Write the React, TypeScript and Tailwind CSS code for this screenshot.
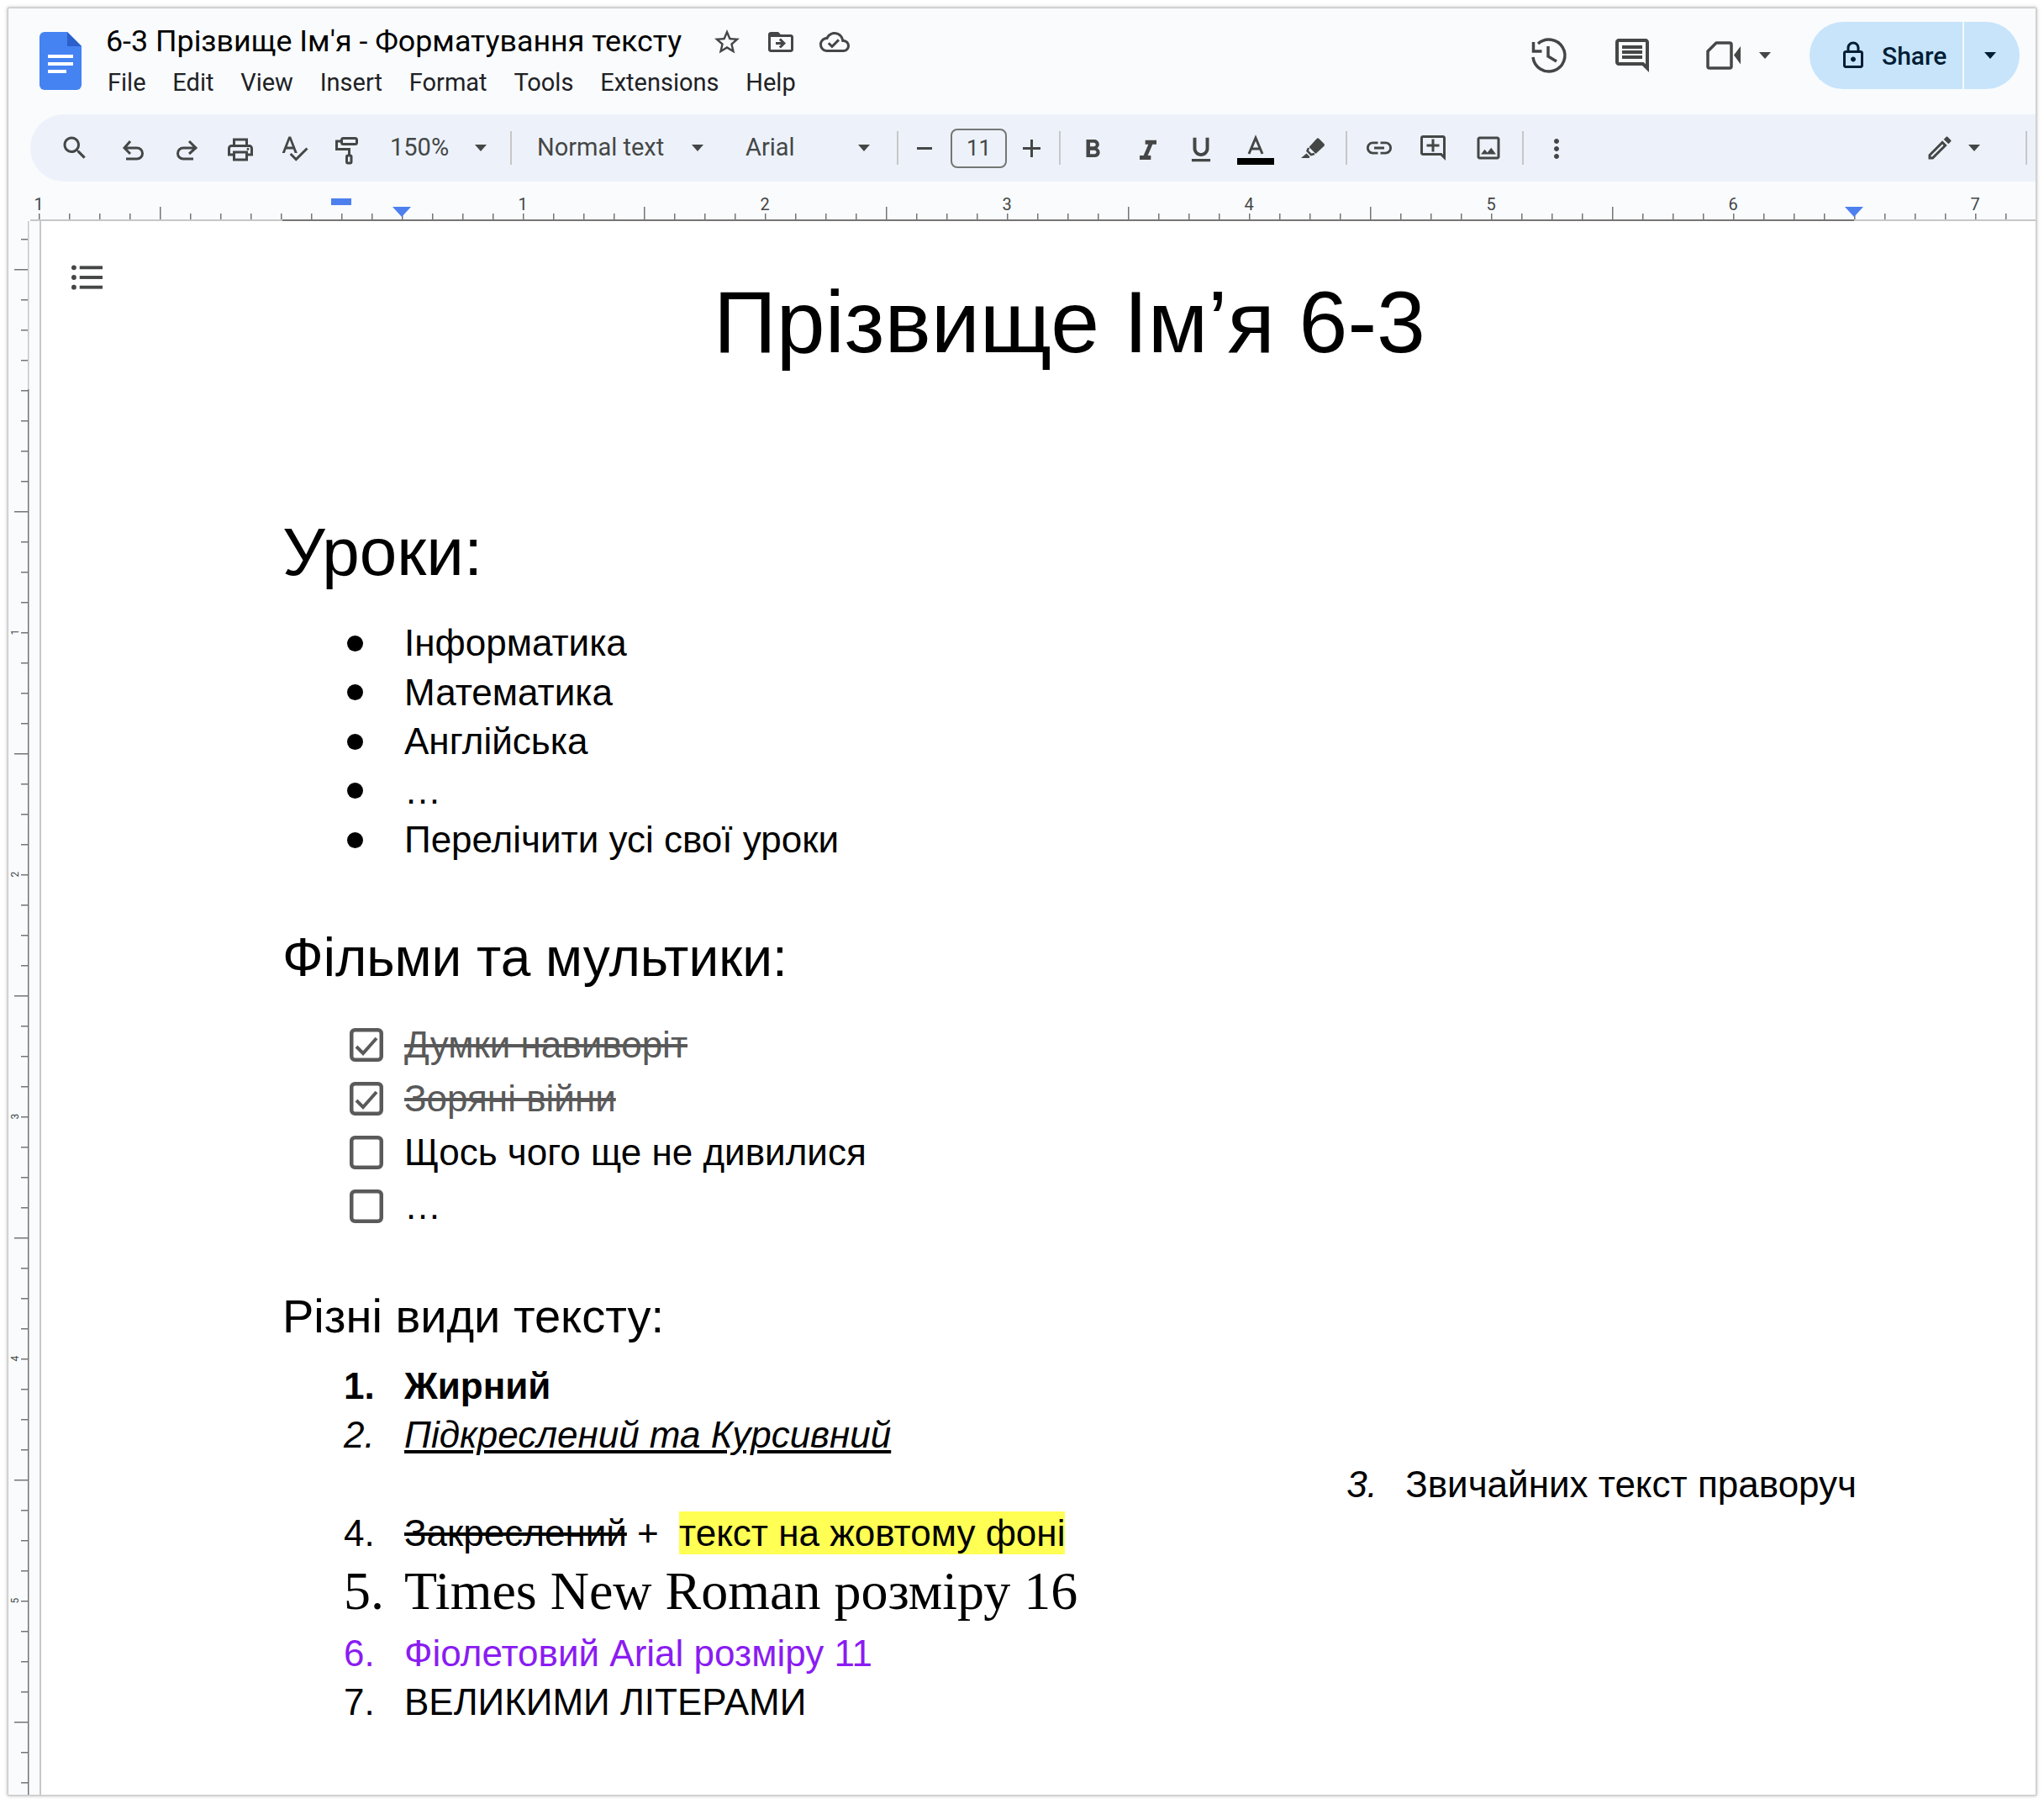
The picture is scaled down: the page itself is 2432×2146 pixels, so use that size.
import type { ReactNode } from 'react'

const ICON = {
  search: 'M15.5 14h-.79l-.28-.27C15.41 12.59 16 11.11 16 9.5 16 5.91 13.09 3 9.5 3S3 5.91 3 9.5 5.91 16 9.5 16c1.61 0 3.09-.59 4.23-1.57l.27.28v.79l5 4.99L20.49 19l-4.99-5zm-6 0C7.01 14 5 11.99 5 9.5S7.01 5 9.5 5 14 7.01 14 9.5 11.99 14 9.5 14z',
  print: 'M19 8h-1V3H6v5H5c-1.66 0-3 1.34-3 3v6h4v4h12v-4h4v-6c0-1.66-1.34-3-3-3zM8 5h8v3H8V5zm8 14H8v-4h8v4zm2-4v-2H6v2H4v-4c0-.55.45-1 1-1h14c.55 0 1 .45 1 1v4h-2zm0-4.5a1 1 0 1 0 0 2 1 1 0 0 0 0-2z',
  spell: 'M12.45 16h2.09L9.43 3H7.57L2.46 16h2.09l1.12-3h5.64l1.14 3zm-6.02-5L8.5 5.48 10.57 11H6.43zm15.16.59l-8.09 8.09L9.83 16l-1.41 1.41 5.09 5.09L23 13l-1.41-1.41z',
  star: 'M22 9.24l-7.19-.62L12 2 9.19 8.63 2 9.24l5.46 4.73L5.82 21 12 17.27 18.18 21l-1.63-7.03L22 9.24zM12 15.4l-3.76 2.27 1-4.28-3.32-2.88 4.38-.38L12 6.1l1.71 4.04 4.38.38-3.32 2.88 1 4.28L12 15.4z',
  folder: 'M20 6h-8l-2-2H4c-1.1 0-2 .9-2 2v12c0 1.1.9 2 2 2h16c1.1 0 2-.9 2-2V8c0-1.1-.9-2-2-2zm0 12H4V8h16v10zm-8.01-9l-1.41 1.41L12.16 12H8v2h4.16l-1.59 1.59L11.99 17 16 13.01 11.99 9z',
  cloud: 'M19.35 10.04C18.67 6.59 15.64 4 12 4 9.11 4 6.6 5.64 5.35 8.04 2.34 8.36 0 10.91 0 14c0 3.31 2.69 6 6 6h13c2.76 0 5-2.24 5-5 0-2.64-2.05-4.78-4.65-4.96zM19 18H6c-2.21 0-4-1.79-4-4 0-2.05 1.53-3.76 3.56-3.97l1.07-.11.5-.95C8.08 7.14 9.94 6 12 6c2.62 0 4.88 1.86 5.39 4.43l.3 1.5 1.53.11c1.56.1 2.78 1.41 2.78 2.96 0 1.65-1.35 3-3 3zm-9-3.82l-2.09-2.09L6.5 13.5 10 17l6.01-6.01-1.41-1.41z',
  comment: 'M21.99 4c0-1.1-.89-2-1.99-2H4c-1.1 0-2 .9-2 2v12c0 1.1.9 2 2 2h14l4 4-.01-18zM20 4v13.17L18.83 16H4V4h16zM6 12h12v2H6zm0-3h12v2H6zm0-3h12v2H6z',
  lock: 'M18 8h-1V6c0-2.76-2.24-5-5-5S7 3.24 7 6v2H6c-1.1 0-2 .9-2 2v10c0 1.1.9 2 2 2h12c1.1 0 2-.9 2-2V10c0-1.1-.9-2-2-2zM9 6c0-1.66 1.34-3 3-3s3 1.34 3 3v2H9V6zm9 14H6V10h12v10zm-6-3c1.1 0 2-.9 2-2s-.9-2-2-2-2 .9-2 2 .9 2 2 2z',
  bold: 'M15.6 10.79c.97-.67 1.65-1.77 1.65-2.79 0-2.26-1.75-4-4-4H7v14h7.04c2.09 0 3.71-1.7 3.71-3.79 0-1.52-.86-2.82-2.15-3.42zM10 6.5h3c.83 0 1.5.67 1.5 1.5s-.67 1.5-1.5 1.5h-3v-3zm3.5 9H10v-3h3.5c.83 0 1.5.67 1.5 1.5s-.67 1.5-1.5 1.5z',
  italic: 'M10 4v3h2.21l-3.42 8H6v3h8v-3h-2.21l3.42-8H18V4z',
  underline: 'M12 17c3.31 0 6-2.69 6-6V3h-2.5v8c0 1.93-1.57 3.5-3.5 3.5S8.5 12.93 8.5 11V3H6v8c0 3.31 2.69 6 6 6zm-7 2v2h14v-2H5z',
  link: 'M3.9 12c0-1.71 1.39-3.1 3.1-3.1h4V7H7c-2.76 0-5 2.24-5 5s2.24 5 5 5h4v-1.9H7c-1.71 0-3.1-1.39-3.1-3.1zM8 13h8v-2H8v2zm9-6h-4v1.9h4c1.71 0 3.1 1.39 3.1 3.1s-1.39 3.1-3.1 3.1h-4V17h4c2.76 0 5-2.24 5-5s-2.24-5-5-5z',
  addComment: 'M22 4c0-1.1-.9-2-2-2H4c-1.1 0-2 .9-2 2v12c0 1.1.9 2 2 2h14l4 4V4zm-2 13.17L18.83 16H4V4h16v13.17zM13 5h-2v4H7v2h4v4h2v-4h4V9h-4z',
  image: 'M19 5v14H5V5h14m0-2H5c-1.1 0-2 .9-2 2v14c0 1.1.9 2 2 2h14c1.1 0 2-.9 2-2V5c0-1.1-.9-2-2-2zm-4.86 8.86l-3 3.87L9 13.14 6 17h12l-3.86-5.14z',
  pencil: 'M14.06 9.02l.92.92L5.92 19H5v-.92l9.06-9.06M17.66 3c-.25 0-.51.1-.7.29l-1.83 1.83 3.75 3.75 1.83-1.83c.39-.39.39-1.02 0-1.41l-2.34-2.34c-.2-.2-.45-.29-.71-.29zm-3.6 3.19L3 17.25V21h3.75L17.81 9.94l-3.75-3.75z',
  more: 'M12 8c1.1 0 2-.9 2-2s-.9-2-2-2-2 .9-2 2 .9 2 2 2zm0 2c-1.1 0-2 .9-2 2s.9 2 2 2 2-.9 2-2-.9-2-2-2zm0 6c-1.1 0-2 .9-2 2s.9 2 2 2 2-.9 2-2-.9-2-2-2z',
}

function Icon({ d, size = 36, color = '#444746' }: { d: string; size?: number; color?: string }) {
  return (
    <svg width={size} height={size} viewBox="0 0 24 24" fill={color}>
      <path d={d} />
    </svg>
  )
}

// drawn in real pixels, so the stroke stays at the 3px the toolbar uses
function Stroke({ children, size = 36, width = 3 }: { children: ReactNode; size?: number; width?: number }) {
  return (
    <svg className="overflow-visible" width={size} height={size} viewBox={`0 0 ${size} ${size}`} fill="none" stroke="#444746" strokeWidth={width}>
      {children}
    </svg>
  )
}

function Caret({ color = '#444746' }: { color?: string }) {
  return (
    <svg width="16" height="10" viewBox="0 0 16 10" fill={color}>
      <path d="M1 1h14L8 9z" />
    </svg>
  )
}

function Slot({ w = 64, children, className = '' }: { w?: 64 | 60; children: ReactNode; className?: string }) {
  return (
    <div className={`flex h-full shrink-0 items-center justify-center ${w === 64 ? 'w-[64px]' : 'w-[60px]'} ${className}`}>
      {children}
    </div>
  )
}

function Sep({ className = '' }: { className?: string }) {
  return <div className={`h-[40px] w-[2px] shrink-0 bg-[#c7c7c7] ${className}`} />
}

function TopRuler() {
  const ticks = Array.from({ length: 67 }, (_, i) => 46 + 36 * i)
  const digits = [[46, '1'], [622, '1'], [910, '2'], [1198, '3'], [1486, '4'], [1774, '5'], [2062, '6'], [2350, '7']] as const
  return (
    <svg className="block shrink-0" width="2412" height="47" viewBox="10 216 2412 47">
      {ticks.map((x) => {
        const tall = (x - 190) % 288 === 0
        return <rect key={x} x={x} y={tall ? 246 : 254} width="1.5" height={tall ? 16 : 8} fill="#757575" />
      })}
      {digits.map(([x, t], i) => (
        <text key={i} x={x} y="250" textAnchor="middle" fontFamily="Roboto, sans-serif" fontSize="20" fill="#444746">
          {t}
        </text>
      ))}
      <rect x="36" y="261" width="300" height="2" fill="#c7c7c7" />
      <rect x="336" y="261" width="1870" height="2" fill="#757575" />
      <rect x="2206" y="261" width="216" height="2" fill="#c7c7c7" />
      <rect x="394" y="236" width="24" height="8" fill="#4d80ee" />
      <path d="M467 246h22l-11 12zM2195 246h22l-11 12z" fill="#4d80ee" />
    </svg>
  )
}

function SideRuler() {
  const ticks = Array.from({ length: 52 }, (_, i) => 284 + 36 * i)
  const digits = [[752, '1'], [1040, '2'], [1328, '3'], [1616, '4'], [1904, '5']] as const
  return (
    <svg className="block shrink-0" width="26" height="1873" viewBox="9 263 26 1873">
      <rect x="32" y="263" width="1.5" height="200" fill="#c7c7c7" />
      <rect x="32" y="463" width="1.5" height="1673" fill="#757575" />
      {ticks.map((y) => {
        const tall = (y - 320) % 288 === 0
        return <rect key={y} x={tall ? 16 : 24} y={y} width={tall ? 16 : 8} height="1.5" fill="#757575" />
      })}
      {digits.map(([y, t]) => (
        <text key={t} x="0" y="0" transform={`translate(21 ${y}) rotate(-90)`} textAnchor="middle" fontFamily="Roboto, sans-serif" fontSize="12" fill="#444746">
          {t}
        </text>
      ))}
    </svg>
  )
}

function Bullet({ children }: { children: ReactNode }) {
  return (
    <div className="flex h-[58.5px] items-center pl-[77px]">
      <span className="mr-[49px] h-[19px] w-[19px] shrink-0 rounded-full bg-black" />
      <span>{children}</span>
    </div>
  )
}

function Check({ checked, children }: { checked?: boolean; children: ReactNode }) {
  return (
    <div className="flex h-[64px] items-center pl-[80px]">
      <svg className="mr-[25px] shrink-0" width="40" height="40" viewBox="0 0 40 40" fill="none">
        <rect x="2.25" y="2.25" width="35.5" height="35.5" rx="4" stroke="#5a5a5a" strokeWidth="4.5" />
        {checked && <path d="M8 22l8 8 16-18" stroke="#5a5a5a" strokeWidth="4" />}
      </svg>
      <span className={checked ? 'text-[#595959] line-through' : ''}>{children}</span>
    </div>
  )
}

function Numbered({ n, className = '', children }: { n: string; className?: string; children: ReactNode }) {
  return (
    <div className={`flex h-[58.5px] items-center whitespace-nowrap pl-[73px] ${className}`}>
      <span className="w-[72px] shrink-0">{n}</span>
      <span>{children}</span>
    </div>
  )
}

export default function App() {
  return (
    <div className="h-[2146px] w-[2432px] overflow-hidden bg-white pl-[9px] pt-[9px]">
      <div className="flex h-[2127px] w-[2414px] flex-col overflow-hidden border border-[#c8c8c8] bg-[#f9fbfd] shadow-[0_0_4px_rgba(0,0,0,0.35)]">
        {/* header */}
        <header className="flex h-[126px] shrink-0 items-start">
          <svg className="ml-[37px] mt-[27px] shrink-0" width="50" height="70" viewBox="0 0 50 70">
            <path d="M6 1h27l17 17v46a6 6 0 0 1-6 6H6a6 6 0 0 1-6-6V7a6 6 0 0 1 6-6z" fill="#4582f2" />
            <path d="M33 1l17 17H33z" fill="#2a5fcc" />
            <rect x="10" y="28" width="30" height="4" fill="#fff" />
            <rect x="10" y="37" width="30" height="4" fill="#fff" />
            <rect x="10" y="46" width="22" height="4" fill="#fff" />
          </svg>
          <div className="ml-[29px] flex flex-col font-['Roboto',sans-serif]">
            <div className="mt-[17px] flex h-[46px] items-center">
              <span className="w-[686px] whitespace-nowrap text-[35.8px] text-black">6-3 Прізвище Ім'я - Форматування тексту</span>
              <span className="ml-[35px] flex h-full w-[36px] items-center"><Icon d={ICON.star} /></span>
              <span className="ml-[28px] flex h-full w-[36px] items-center"><Icon d={ICON.folder} /></span>
              <span className="ml-[28px] flex h-full w-[36px] items-center"><Icon d={ICON.cloud} /></span>
            </div>
            <nav className="ml-[2px] mt-[7px] flex gap-[31.8px] text-[29px] leading-[36px] text-[#202124]">
              {['File', 'Edit', 'View', 'Insert', 'Format', 'Tools', 'Extensions', 'Help'].map((m) => (
                <span key={m}>{m}</span>
              ))}
            </nav>
          </div>
          <div className="ml-auto mr-[19px] mt-[16px] flex h-[80px] items-center">
            <Stroke size={48} width={3.5}>
              <path d="M11 10A19 19 0 1 1 5 26M5.5 8v11h10M23 13v12l10 6" />
            </Stroke>
            <span className="ml-[51px]"><Icon d={ICON.comment} size={48} /></span>
            <span className="ml-[60px] flex">
              <Stroke size={48} width={3.5}>
                <path d="M6 19L16 9h16a2 2 0 0 1 2 2v26a2 2 0 0 1-2 2H8a2 2 0 0 1-2-2z" strokeLinejoin="round" />
                <path d="M37 23.5L45 13v21.5z" fill="#444746" stroke="none" />
              </Stroke>
            </span>
            <span className="ml-[18px] mr-[45px]"><Caret /></span>
            <div className="flex h-[80px] w-[250px] items-center rounded-full bg-[#c7e4fb] font-['Roboto',sans-serif] text-[#001d35]">
              <span className="ml-[34px]"><Icon d={ICON.lock} color="#001d35" /></span>
              <span className="ml-[16px] w-[78px] text-[30px] font-medium">Share</span>
              <span className="ml-[18px] h-full w-[2px] bg-[#f4f9fd]" />
              <span className="ml-[23px]"><Caret color="#001d35" /></span>
            </div>
          </div>
        </header>

        {/* toolbar */}
        <div className="ml-[26px] flex h-[80px] shrink-0 items-center rounded-l-[40px] bg-[#edf2fa] font-['Roboto',sans-serif] text-[29px] text-[#444746]">
          <Slot className="ml-[21px]"><Icon d={ICON.search} /></Slot>
          <Slot className="ml-[5px]">
            <Stroke><path d="M15 10l-7 8 7 7M8 18h15a6.5 6.5 0 0 1 0 13H10" /></Stroke>
          </Slot>
          <Slot>
            <Stroke><path d="M21 10l8 8-8 7M29 18H14a6.5 6.5 0 0 0 0 13h12" /></Stroke>
          </Slot>
          <Slot className="pt-[4px]"><Icon d={ICON.print} /></Slot>
          <Slot><Icon d={ICON.spell} /></Slot>
          <Slot>
            <Stroke>
              <rect x="10.5" y="6.5" width="18" height="7" rx="2" />
              <path d="M10 10H4.5v9.5h15V26" />
              <rect x="16.5" y="27" width="5.5" height="9" rx="1.5" />
            </Stroke>
          </Slot>
          <span className="ml-[18px] w-[71px]">150%</span>
          <span className="ml-[29px]"><Caret /></span>
          <Sep className="ml-[27px]" />
          <span className="ml-[30px] w-[153px] whitespace-nowrap">Normal text</span>
          <span className="ml-[30px]"><Caret /></span>
          <span className="ml-[49px] w-[59px]">Arial</span>
          <span className="ml-[74px]"><Caret /></span>
          <Sep className="ml-[31px]" />
          <span className="ml-[22px] h-[3px] w-[18px] bg-[#444746]" />
          <span className="ml-[22px] flex h-[47px] w-[67px] items-center justify-center rounded-[8px] border-2 border-[#747775] text-[26px]">11</span>
          <svg className="ml-[14px]" width="30" height="30" viewBox="0 0 30 30" fill="#444746"><path d="M14 5h3v9h9v3h-9v9h-3v-9H5v-3h9z" /></svg>
          <Sep className="ml-[18px]" />
          <Slot w={60} className="ml-[8px] pt-[4px]"><Icon d={ICON.bold} /></Slot>
          <Slot className="ml-[4px] pt-[7px]"><Icon d={ICON.italic} size={40} /></Slot>
          <Slot w={60} className="ml-[1px] pt-[4px]"><Icon d={ICON.underline} size={38} /></Slot>
          <Slot w={64} className="ml-[3px]">
            <svg width="48" height="40" viewBox="0 0 48 40" fill="none" stroke="#444746" strokeWidth="3">
              <path d="M16 27l8-19 8 19M19 21h10" />
              <rect x="2" y="32" width="44" height="8" fill="#000" stroke="none" />
            </svg>
          </Slot>
          <Slot className="ml-[5px]">
            <svg width="36" height="36" viewBox="0 0 36 36" fill="#444746">
              <path d="M21.6 7a2 2 0 0 1 2.8 0l6 6a2 2 0 0 1 0 2.8L20.5 25 12.5 17z" />
              <path d="M12 18l-1.5 3.5 4.5 4.5 4-1" fill="none" stroke="#444746" strokeWidth="2.5" />
              <path d="M9.5 24.5l4 4-1 1.5H3z" />
            </svg>
          </Slot>
          <Sep className="ml-[6px]" />
          <Slot className="ml-[6px]"><Icon d={ICON.link} /></Slot>
          <Slot><Icon d={ICON.addComment} /></Slot>
          <Slot className="ml-[2px]"><Icon d={ICON.image} /></Slot>
          <Sep className="ml-[8px]" />
          <Slot className="ml-[7px] pt-[2px]"><Icon d={ICON.more} /></Slot>
          <span className="ml-auto"><Icon d={ICON.pencil} /></span>
          <span className="ml-[15px]"><Caret /></span>
          <Sep className="ml-[53px] mr-[10px]" />
        </div>

        <TopRuler />

        {/* document */}
        <div className="flex min-h-0 flex-1">
          <SideRuler />
          <div className="w-[13px] shrink-0 border-r-2 border-[#c7c7c7]" />
          <main className="flex flex-1 bg-white font-['Liberation_Sans',Arial,sans-serif] text-[44px] leading-[58px] text-black">
            <div className="w-[287px] shrink-0 pl-[36px] pt-[52px]">
              <svg width="37" height="30" viewBox="0 0 38 30" fill="#444746">
                <circle cx="3" cy="3" r="3" /><rect x="10" y="1" width="28" height="4" />
                <circle cx="3" cy="15" r="3" /><rect x="10" y="13" width="28" height="4" />
                <circle cx="3" cy="27" r="3" /><rect x="10" y="25" width="28" height="4" />
              </svg>
            </div>
            <div className="w-[1873px] shrink-0">
              <h1 className="mt-[60px] text-center text-[104px] leading-[120px]">Прізвище Ім’я 6-3</h1>
              <h2 className="mt-[168px] text-[80px] leading-[92px]">Уроки:</h2>
              <div className="mt-[33px]">
                <Bullet>Інформатика</Bullet>
                <Bullet>Математика</Bullet>
                <Bullet>Англійська</Bullet>
                <Bullet>…</Bullet>
                <Bullet>Перелічити усі свої уроки</Bullet>
              </div>
              <h2 className="mt-[73px] text-[64px] leading-[74px]">Фільми та мультики:</h2>
              <div className="mt-[35px]">
                <Check checked>Думки навиворіт</Check>
                <Check checked>Зоряні війни</Check>
                <Check>Щось чого ще не дивилися</Check>
                <Check>…</Check>
              </div>
              <h2 className="mt-[67px] text-[56px] leading-[64px]">Різні види тексту:</h2>
              <div className="mt-[22px]">
                <Numbered n="1." className="font-bold">Жирний</Numbered>
                <Numbered n="2." className="italic"><span className="underline">Підкреслений та Курсивний</span></Numbered>
                <div className="flex h-[58.5px] items-center justify-end">
                  <span className="w-[70px] italic">3.</span>
                  <span>Звичайних текст праворуч</span>
                </div>
                <Numbered n="4.">
                  <span className="line-through">Закреслений</span> +{' '}
                  <span className="ml-[12px] inline-block bg-[#ffff54] leading-[51px]">текст на жовтому фоні</span>
                </Numbered>
                <div className="flex h-[84px] items-center whitespace-nowrap pb-[6px] pl-[73px] font-['Liberation_Serif','Times_New_Roman',serif] text-[64px]">
                  <span className="w-[72px] shrink-0">5.</span>
                  <span>Times New Roman розміру 16</span>
                </div>
                <Numbered n="6." className="text-[#8a1cf2]">Фіолетовий Arial розміру 11</Numbered>
                <Numbered n="7.">ВЕЛИКИМИ ЛІТЕРАМИ</Numbered>
              </div>
            </div>
          </main>
        </div>
      </div>
    </div>
  )
}
